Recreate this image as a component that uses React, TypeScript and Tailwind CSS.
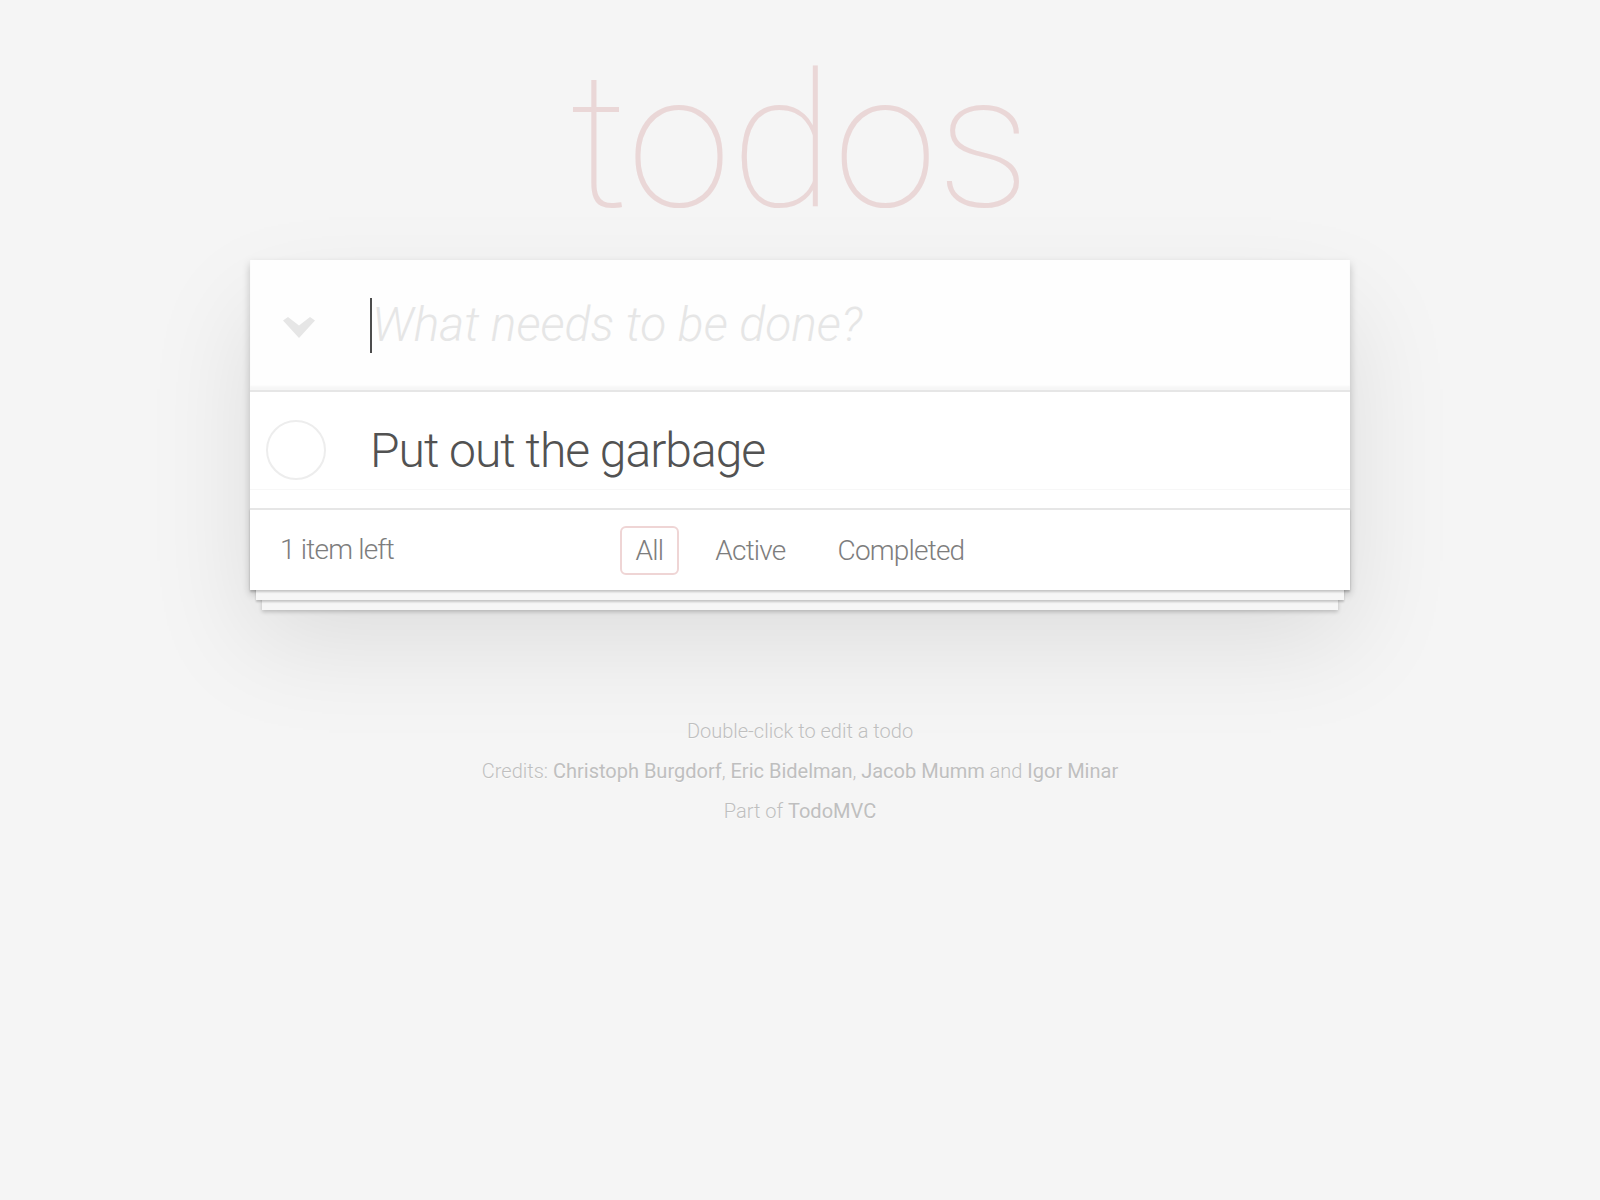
const Chevron = () => (
  <svg width="32" height="21" viewBox="0 0 32 21">
    <polygon points="0,3.5 5,0 16,8.5 27,0 32,3.5 16,21" fill="#e6e6e6" />
  </svg>
)

const Filters = () => {
  const List = [
    { name: "All", selected: true },
    { name: "Active", selected: false },
    { name: "Completed", selected: false },
  ]
  return (
    <ul className="flex gap-[20px]">
      {List.map(item => (
        <li key={item.name}>
          <a
            className={
              item.selected
                ? "block px-[14px] py-[6px] leading-[33px] border-2 rounded-[6px] border-[#efd5d5]"
                : "block px-[14px] py-[6px] leading-[33px] border-2 rounded-[6px] border-transparent"
            }
          >
            {item.name}
          </a>
        </li>
      ))}
    </ul>
  )
}

const App = () => {
  return (
    <div className="min-h-screen bg-[#f5f5f5] font-['Roboto',sans-serif] flex flex-col items-center">
      <h1 className="pt-[48px] h-[236px] text-[188px] leading-[188px] font-thin text-[#ead7d7] text-center">
        todos
      </h1>

      <section className="mt-[24px] w-[1100px] bg-white shadow-[0_4px_8px_0_rgba(0,0,0,0.2),0_50px_100px_0_rgba(0,0,0,0.1)]">
        <header className="h-[130px] flex items-center bg-[rgba(0,0,0,0.003)] shadow-[inset_0_-4px_2px_rgba(0,0,0,0.03)]">
          <div className="w-[120px] pl-[33px] pt-[4px] flex">
            <Chevron />
          </div>
          <div className="w-[2px] h-[55px] bg-[#4d4d4d]" />
          <span className="text-[48px] italic font-light text-[#e6e6e6]">What needs to be done?</span>
        </header>

        <ul className="border-t-2 border-[#e6e6e6]">
          <li className="relative h-[116px] flex flex-col">
            <svg className="absolute left-[16px] top-[28px]" width="60" height="60" viewBox="0 0 60 60">
              <circle cx="30" cy="30" r="29" fill="none" stroke="#ededed" strokeWidth="2" />
            </svg>
            <label className="pl-[120px] pt-[30px] pb-[9px] leading-[57.6px] text-[48px] tracking-[-1px] font-light text-[#525252] border-b border-[#f7f7f7]">
              Put out the garbage
            </label>
          </li>
        </ul>

        <footer className="h-[82px] px-[30px] border-t-2 border-[#e6e6e6] grid grid-cols-[1fr_auto_1fr] items-center text-[28px] leading-[40px] tracking-[-0.8px] font-light text-[#7d7d7d] shadow-[0_2px_2px_rgba(0,0,0,0.2),0_16px_0_-6px_#f6f6f6,0_18px_2px_-6px_rgba(0,0,0,0.2),0_32px_0_-12px_#f6f6f6,0_34px_4px_-12px_rgba(0,0,0,0.2)]">
          <span>1 item left</span>
          <Filters />
          <span />
        </footer>
      </section>

      <footer className="mt-[131px] flex flex-col gap-[20px] text-center text-[20px] leading-[20px] font-light text-[#bfbfbf] [text-shadow:0_1px_0_rgba(255,255,255,0.5)]">
        <p>Double-click to edit a todo</p>
        <p>
          Credits: <a className="font-normal">Christoph Burgdorf</a>, <a className="font-normal">Eric Bidelman</a>,{" "}
          <a className="font-normal">Jacob Mumm</a> and <a className="font-normal">Igor Minar</a>
        </p>
        <p>
          Part of <a className="font-normal">TodoMVC</a>
        </p>
      </footer>
    </div>
  )
}

export default App
